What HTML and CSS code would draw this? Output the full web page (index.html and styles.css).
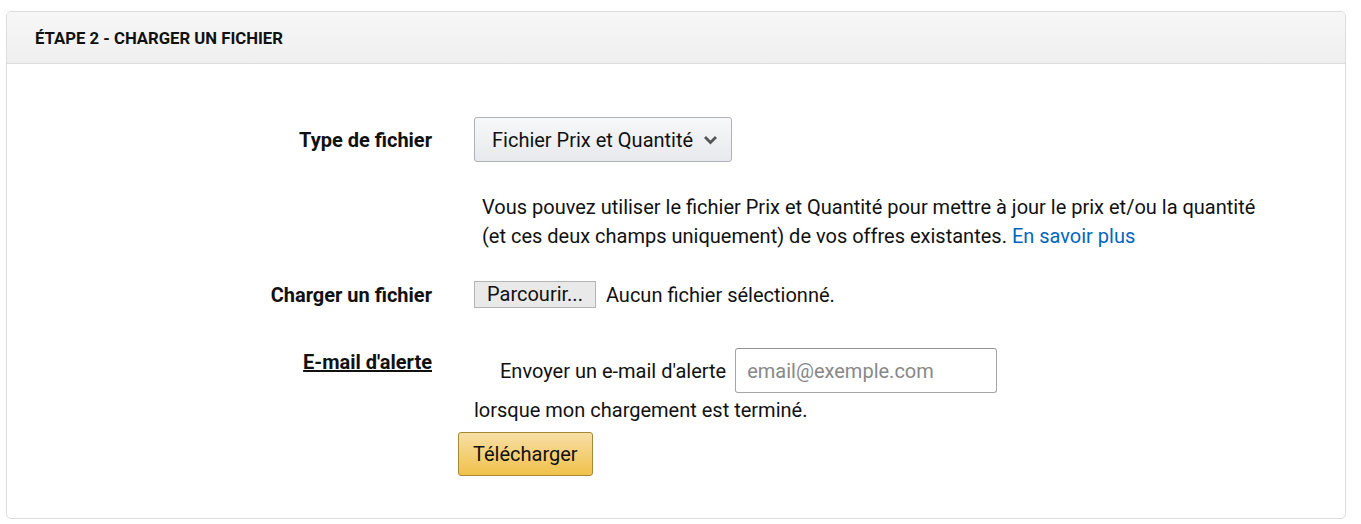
FILE: index.html
```html
<!DOCTYPE html>
<html lang="fr">
<head>
    <meta charset="UTF-8">
    <link rel="stylesheet" href="styles.css">
    <title>Charger un fichier</title>
</head>
<body>
    <section class="panel">
        <div class="panel-head">ÉTAPE 2 - CHARGER UN FICHIER</div>
        <form class="panel-body">
            <div class="row row-type">
                <label class="row-label">Type de fichier</label>
                <div class="row-field">
                    <span class="dropdown">
                        Fichier Prix et Quantité
                        <svg class="chevron" width="15" height="10" viewBox="0 0 15 10"><path d="M2 2 L7.5 7.5 L13 2" fill="none" stroke="#555" stroke-width="2.8"/></svg>
                    </span>
                </div>
            </div>

            <p class="help">Vous pouvez utiliser le fichier Prix et Quantité pour mettre à jour le prix et/ou la quantité<br>(et ces deux champs uniquement) de vos offres existantes. <a href="#">En savoir plus</a></p>

            <div class="row row-file">
                <label class="row-label">Charger un fichier</label>
                <div class="row-field">
                    <span class="file-btn">Parcourir...</span>
                    <span class="file-name">Aucun fichier sélectionné.</span>
                </div>
            </div>

            <div class="row row-mail">
                <label class="row-label underline">E-mail d'alerte</label>
                <div class="row-field">
                    <span class="mail-text">Envoyer un e-mail d'alerte</span>
                    <input type="text" class="mail-input" placeholder="email@exemple.com">
                </div>
            </div>
            <p class="mail-after">lorsque mon chargement est terminé.</p>

            <button type="button" class="upload-btn">Télécharger</button>
        </form>
    </section>
</body>
</html>
```

FILE: styles.css
```css
body {
    margin: 0;
    padding: 11px 15px 4px 6px;
    font-family: Roboto, "Liberation Sans", sans-serif;
    color: #111;
    background: #fff;
}

.panel {
    border: 1px solid #ddd;
    border-radius: 5px;
    overflow: hidden;
}

.panel-head {
    height: 51px;
    line-height: 53px;
    padding-left: 28px;
    border-bottom: 1px solid #ddd;
    background: linear-gradient(#f7f7f7, #efefef);
    font-size: 16.7px;
    font-weight: bold;
}

.panel-body {
    padding: 53px 0 42px;
    font-size: 20px;
    line-height: 24px;
}

.row {
    display: grid;
    grid-template-columns: 425px 1fr;
    column-gap: 42px;
    align-items: center;
}

.row-label {
    text-align: right;
    font-weight: bold;
}

.row-field {
    display: flex;
    align-items: center;
}

.underline {
    text-decoration: underline;
}

.dropdown {
    display: inline-flex;
    align-items: center;
    gap: 10px;
    height: 43px;
    padding: 0 13px 0 17px;
    border: 1px solid #adb1b8;
    border-radius: 3px;
    background: linear-gradient(#f7f8fa, #e7e9ec);
}

.help {
    margin: 31px 0 0 475px;
    line-height: 29px;
}

.help a {
    color: #0066c0;
    text-decoration: none;
}

.row-file {
    margin-top: 30px;
}

.file-btn {
    display: inline-block;
    height: 25px;
    line-height: 25px;
    padding: 0 12px;
    border: 1px solid #b4b4b4;
    background: #e9e9e9;
}

.file-name {
    margin-left: 10px;
}

.row-mail {
    margin-top: 40px;
    align-items: start;
}

.row-mail .row-label {
    padding-top: 2px;
}

.mail-text {
    margin-left: 26px;
    margin-right: 9px;
}

.mail-input {
    width: 262px;
    height: 45px;
    box-sizing: border-box;
    padding: 0 11px;
    border: 1px solid #a6a6a6;
    border-top-color: #949494;
    border-radius: 3px;
    font: 20px Roboto, "Liberation Sans", sans-serif;
}

.mail-input::placeholder {
    color: #888;
}

.mail-after {
    margin: 5px 0 0 467px;
}

.upload-btn {
    display: block;
    margin: 10px 0 0 451px;
    height: 44px;
    padding: 0 14px;
    border: 1px solid #a88734;
    border-radius: 3px;
    background: linear-gradient(#f7dfa5, #f0c14b);
    font: 20px Roboto, "Liberation Sans", sans-serif;
    color: #111;
}
```
